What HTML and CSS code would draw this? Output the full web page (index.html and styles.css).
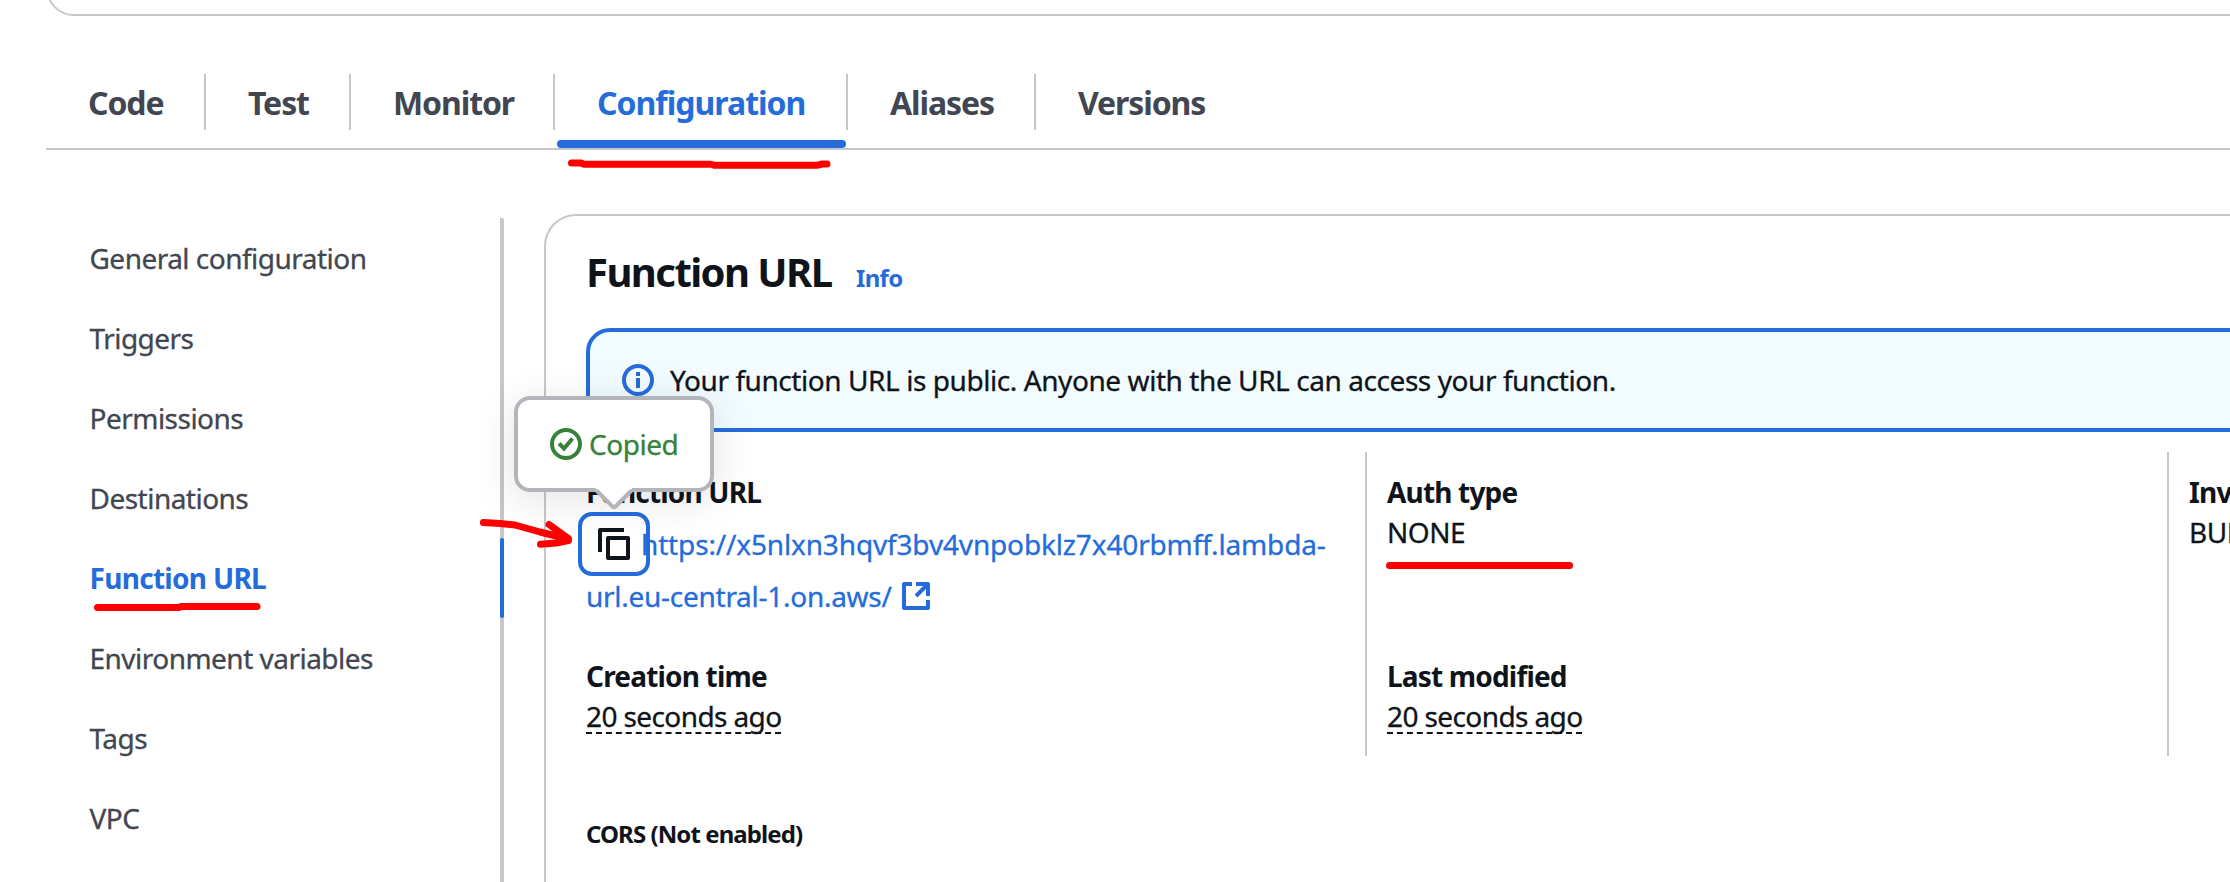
FILE: index.html
```html
<!DOCTYPE html>
<html lang="en">
<head>
<meta charset="utf-8">
<title>Function URL</title>
<link rel="stylesheet" href="styles.css">
</head>
<body>
<div class="overview-card"></div>

<div class="tabs">
  <a class="tab tab-code">Code</a>
  <a class="tab tab-test">Test</a>
  <a class="tab tab-monitor">Monitor</a>
  <a class="tab tab-config active">Configuration</a>
  <a class="tab tab-aliases">Aliases</a>
  <a class="tab tab-versions">Versions</a>
</div>

<div class="content">
  <nav class="side-nav">
    <a class="nav-item">General configuration</a>
    <a class="nav-item">Triggers</a>
    <a class="nav-item">Permissions</a>
    <a class="nav-item">Destinations</a>
    <a class="nav-item active">Function URL</a>
    <a class="nav-item">Environment variables</a>
    <a class="nav-item">Tags</a>
    <a class="nav-item">VPC</a>
  </nav>

  <main class="panel">
    <header class="panel-header">
      <h2>Function URL</h2>
      <a class="info">Info</a>
    </header>

    <div class="alert">
      <svg class="icon" viewBox="0 0 32 32"><circle cx="16" cy="16" r="14"/><path d="M16 14v10M16 8v4"/></svg>
      <span>Your function URL is public. Anyone with the URL can access your function.</span>
    </div>

    <div class="columns">
      <section class="column">
        <div class="field url-field">
          <div class="label">Function URL</div>
          <button class="copy-button" aria-label="Copy">
            <svg class="copy-icon" viewBox="0 0 32 32"><path d="M2 24V2H26"/><path d="M10 10H30V30H10Z"/></svg>
          </button>
          <a class="url"><span class="url-start">https://x5nlxn3hqvf3bv4vnpobklz7x40rbmff.lambda-</span><span class="url-end">url.eu-central-1.on.aws/<svg class="external" viewBox="0 0 28 28"><path d="M10 2H2V26H26V18M14 2H26V14M25 3L14 14"/></svg></span></a>
          <div class="tooltip">
            <svg class="icon" viewBox="0 0 32 32"><circle cx="16" cy="16" r="14"/><path d="M9 15.5L14 20.5L22.5 10.5"/></svg>
            <span>Copied</span>
            <svg class="tooltip-arrow" viewBox="0 0 40 24"><path class="arrow-fill" d="M2 0V2L20 20L38 2V0Z"/><path class="arrow-line" d="M2.500 3.500L18.500 19.500Q20 21 21.500 19.500L37.500 3.500"/></svg>
          </div>
        </div>
        <div class="field">
          <div class="label">Creation time</div>
          <div class="value time">20 seconds ago</div>
        </div>
      </section>
      <section class="column">
        <div class="field tall">
          <div class="label">Auth type</div>
          <div class="value caps">NONE</div>
        </div>
        <div class="field">
          <div class="label">Last modified</div>
          <div class="value time">20 seconds ago</div>
        </div>
      </section>
      <section class="column">
        <div class="field tall">
          <div class="label">Invoke mode</div>
          <div class="value caps">BUFFERED</div>
        </div>
      </section>
    </div>

    <h5 class="cors">CORS (Not enabled)</h5>
  </main>
</div>

<svg class="marks" viewBox="0 0 2230 882">
  <path d="M571.500 163H581L584 164.300H711L714 165.300H817L822 164H827"/>
  <path d="M97.500 607.400H179L181 606.600H257"/>
  <path d="M1389.500 565.500H1569.500"/>
  <path d="M483.500 522.500L500 523.500L515 525L540 532L568 539M549 524.500L568.500 538.500V540.500L556 543L540.500 544.300"/>
</svg>
</body>
</html>
```
FILE: styles.css
```css
* { box-sizing: border-box; }

body {
  position: relative;
  margin: 0;
  height: 882px;
  overflow: hidden;
  background: #fff;
  color: #0f141a;
  font: 400 28px/40px "Noto Sans", sans-serif;
  letter-spacing: -0.45px;
  -webkit-text-stroke: 0.3px;
}

h2, h5 { margin: 0; font-weight: 700; }

.overview-card {
  height: 56px;
  margin: -40px -40px 0 46px;
  border: 2px solid #c6c6cd;
  border-radius: 32px;
}

.tabs {
  display: flex;
  margin-left: 46px;
  padding: 58px 0 18px;
  border-bottom: 2px solid #c6c6cd;
}

.tab {
  position: relative;
  height: 56px;
  padding-left: 42px;
  border-right: 2px solid #c6c6cd;
  color: #424650;
  font-size: 32px;
  font-weight: 700;
  line-height: 57px;
  letter-spacing: -1.1px;
  -webkit-text-stroke: 0;
}

.tab-code { width: 160px; }
.tab-test { width: 145px; }
.tab-monitor { width: 204px; }
.tab-config { width: 293px; letter-spacing: -1px; }
.tab-aliases { width: 188px; }
.tab-versions { width: 220px; border-right: 0; }
.tab.active { color: #256cdb; }

.tab.active::after {
  content: "";
  position: absolute;
  left: 2px;
  right: 0;
  bottom: -18px;
  height: 8px;
  border-radius: 4px;
  background: #256cdb;
}

.content {
  display: grid;
  grid-template-columns: 458px 1fr;
  column-gap: 40px;
  height: 732px;
  padding-left: 46px;
  padding-top: 64px;
}

.side-nav {
  display: flex;
  flex-direction: column;
  margin-top: 4px;
  border-right: 4px solid #c6c6cd;
  border-top-right-radius: 2px;
}

.nav-item {
  position: relative;
  height: 80px;
  padding-left: 43.5px;
  color: #424650;
  line-height: 80px;
  letter-spacing: -0.52px;
}

.nav-item.active {
  color: #256cdb;
  font-weight: 700;
  letter-spacing: -0.7px;
  -webkit-text-stroke: 0;
}

.nav-item.active::after {
  content: "";
  position: absolute;
  top: 0;
  right: -4px;
  width: 4px;
  height: 80px;
  border-radius: 2px;
  background: #256cdb;
}

.panel {
  margin-right: -40px;
  padding: 32px 0 0 40px;
  border: 2px solid #c6c6cd;
  border-bottom: 0;
  border-radius: 32px 32px 0 0;
}

.panel-header {
  display: flex;
  align-items: baseline;
  gap: 24.5px;
  height: 47px;
  margin-bottom: 33px;
  -webkit-text-stroke: 0;
}

.panel-header h2 {
  font-size: 40px;
  line-height: 48px;
  letter-spacing: -1.55px;
}

.info {
  color: #256cdb;
  font-size: 24px;
  font-weight: 700;
  letter-spacing: -0.7px;
}

.alert {
  display: flex;
  align-items: center;
  gap: 16px;
  height: 104px;
  padding-left: 32px;
  border: 4px solid #256cdb;
  border-radius: 24px;
  background: #f2fbfe;
  letter-spacing: -0.43px;
}

.icon {
  width: 32px;
  height: 32px;
  fill: none;
  stroke: currentColor;
  stroke-width: 4;
}

.alert .icon { color: #256cdb; }

.columns {
  display: grid;
  grid-template-columns: 779px 802px 1fr;
  height: 304px;
  margin-top: 20px;
}

.column { padding-top: 20px; }

.column + .column {
  padding-left: 20px;
  border-left: 2px solid #c6c6cd;
}

.label {
  font-weight: 700;
  letter-spacing: -0.82px;
  white-space: nowrap;
  -webkit-text-stroke: 0;
}

.tall { height: 184px; }

.url-field {
  position: relative;
  height: 184px;
}

.copy-button {
  position: absolute;
  left: -8px;
  top: 40px;
  width: 72px;
  height: 64px;
  padding: 12px 16px;
  border: 4px solid #256cdb;
  border-radius: 14px;
  background: #fff;
}

.copy-icon {
  display: block;
  width: 32px;
  height: 32px;
  fill: none;
  stroke: #0f141a;
  stroke-width: 4;
  stroke-linejoin: round;
}

.url {
  position: relative;
  display: flex;
  flex-direction: column;
  padding-top: 6px;
  color: #256cdb;
  line-height: 52px;
  letter-spacing: -0.15px;
  white-space: nowrap;
}

.url-start { padding-left: 55px; }

.url-end {
  display: flex;
  align-items: center;
  letter-spacing: -0.27px;
}

.external {
  width: 28px;
  height: 28px;
  margin-left: 10px;
  fill: none;
  stroke: currentColor;
  stroke-width: 4;
  stroke-linejoin: round;
}

.tooltip {
  position: absolute;
  left: -72px;
  top: -76px;
  display: flex;
  align-items: center;
  gap: 7px;
  width: 200px;
  height: 96px;
  padding-left: 32px;
  border: 4px solid #b4b4bb;
  border-radius: 16px;
  background: #fff;
  box-shadow: 0 8px 40px 2px rgba(0, 7, 22, 0.1);
  color: #37813a;
}

.tooltip-arrow {
  position: absolute;
  left: 76px;
  top: 87px;
  width: 40px;
  height: 24px;
}

.arrow-fill { fill: #fff; }

.arrow-line {
  fill: none;
  stroke: #b4b4bb;
  stroke-width: 4;
}

.time {
  width: 195px;
  height: 38px;
  border-bottom: 2px dashed #0f141a;
  letter-spacing: -0.6px;
  white-space: nowrap;
}

.cors {
  margin-top: 62px;
  font-size: 24px;
  line-height: 32px;
  letter-spacing: -0.92px;
  -webkit-text-stroke: 0;
}

/* Hand-drawn red highlights over the page */
.marks {
  position: absolute;
  left: 0;
  top: 0;
  width: 2230px;
  height: 882px;
  fill: none;
  stroke: #f00;
  stroke-width: 7;
  stroke-linecap: round;
  stroke-linejoin: round;
  pointer-events: none;
}
```
